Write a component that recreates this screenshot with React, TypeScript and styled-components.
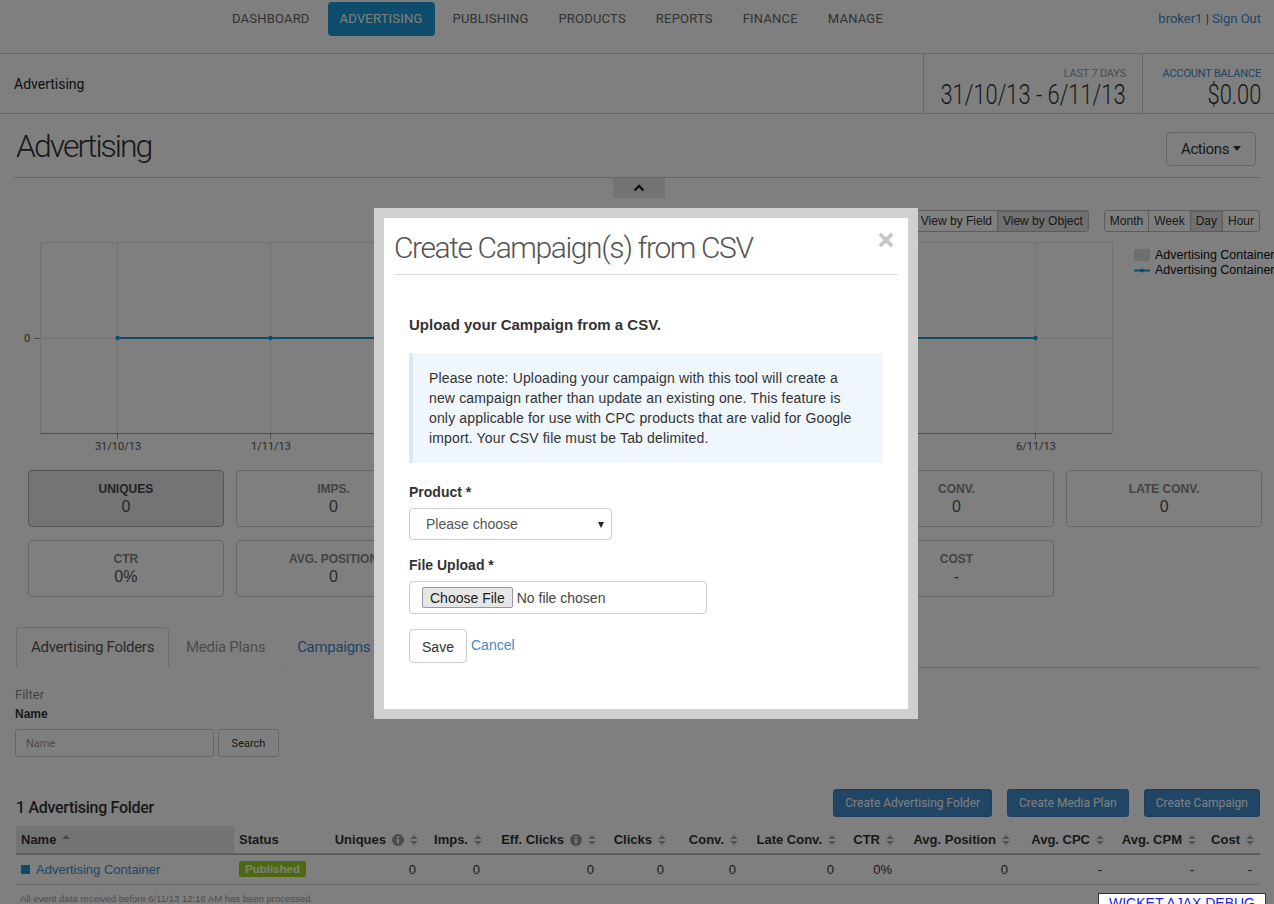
import React from "react"
import styled, { createGlobalStyle } from "styled-components"

const sans = `"Liberation Sans", Arial, sans-serif`
const cond = `Roboto, "Liberation Sans", sans-serif`
const blue = "#428bca"
const brand = "#1a9bd7"

const GlobalStyle = createGlobalStyle`
  *, *::before, *::after { box-sizing: border-box; }
  html, body { margin: 0; padding: 0; }
  body {
    background: #fff;
    font-family: ${sans};
    font-size: 13px;
    color: #333;
    width: 1274px;
    height: 904px;
    overflow: hidden;
  }
`

const Page = styled.div`
  width: 1274px;
`

/* ---------- top navigation ---------- */
const TopNav = styled.div`
  height: 54px;
  border-bottom: 1px solid #ccc;
  display: flex;
  align-items: flex-start;
  padding: 2px 13px 0 220px;
`

const NavList = styled.div`
  display: flex;
  gap: 6px;
  flex: 1;
`

const NavItem = styled.div<{ $active?: boolean }>`
  height: 34px;
  line-height: 34px;
  padding: 0 12px;
  border-radius: 4px;
  font-family: ${cond};
  font-size: 13px;
  letter-spacing: 0.2px;
  color: ${(p) => (p.$active ? "#fff" : "#666")};
  background: ${(p) => (p.$active ? brand : "transparent")};
`

const UserLinks = styled.div`
  line-height: 34px;
  font-family: ${cond};
  font-size: 13px;
  color: #555;
  a { color: ${blue}; text-decoration: none; }
`

/* ---------- header bar ---------- */
const HeaderBar = styled.div`
  height: 60px;
  border-bottom: 1px solid #ccc;
  display: flex;
  align-items: stretch;
`

const Crumb = styled.div`
  flex: 1;
  padding-left: 14px;
  display: flex;
  align-items: center;
  font-family: ${cond};
  font-size: 14px;
  color: #222;
`

const InfoPanel = styled.div<{ $w: number; $pr: number }>`
  width: ${(p) => p.$w}px;
  border-left: 1px solid #ccc;
  padding: 13px ${(p) => p.$pr}px 0 0;
  display: flex;
  flex-direction: column;
  align-items: flex-end;
  white-space: nowrap;
`

const PanelLabel = styled.div<{ $blue?: boolean }>`
  font-family: ${cond};
  font-size: 11px;
  line-height: 13px;
  color: ${(p) => (p.$blue ? blue : "#999")};
  letter-spacing: -0.2px;
`

const PanelValue = styled.div`
  font-family: ${cond};
  font-weight: 300;
  font-size: 27px;
  line-height: 30px;
  color: #333;
  transform: scaleX(0.81);
  transform-origin: right center;
`

/* ---------- title row ---------- */
const TitleRow = styled.div`
  margin: 0 14px;
  height: 64px;
  border-bottom: 1px solid #ccc;
  display: flex;
  align-items: center;
  justify-content: space-between;
`

const PageTitle = styled.h1`
  margin: 0 0 0 2px;
  font-family: ${cond};
  font-weight: 300;
  font-size: 32px;
  letter-spacing: -2px;
  color: #333;
`

const ActionsButton = styled.button`
  height: 34px;
  width: 90px;
  margin: 6px 4px 0 0;
  background: #fff;
  border: 1px solid #ccc;
  border-radius: 4px;
  font-family: ${cond};
  font-size: 15px;
  letter-spacing: -0.4px;
  color: #333;
  display: flex;
  align-items: center;
  justify-content: center;
  gap: 4px;
`

const Caret = styled.span`
  width: 0;
  height: 0;
  border-left: 4px solid transparent;
  border-right: 4px solid transparent;
  border-top: 5px solid #333;
`

const CollapseTab = styled.div`
  width: 52px;
  height: 20px;
  margin: 0 auto 0 613px;
  background: #e6e6e6;
  display: flex;
  align-items: center;
  justify-content: center;
`

/* ---------- chart ---------- */
const ChartControls = styled.div`
  margin-top: 12px;
  padding-right: 14px;
  display: flex;
  justify-content: flex-end;
  gap: 15px;
`

const Segmented = styled.div`
  display: flex;
  border: 1px solid #bbb;
  border-radius: 3px;
  overflow: hidden;
`

const SegButton = styled.div<{ $active?: boolean }>`
  height: 20px;
  line-height: 20px;
  padding: 0 5px;
  font-family: ${sans};
  font-size: 12px;
  color: #333;
  background: ${(p) => (p.$active ? "#e2e2e2" : "#fff")};
  box-shadow: ${(p) => (p.$active ? "inset 0 1px 2px rgba(0,0,0,0.15)" : "none")};
  & + & { border-left: 1px solid #bbb; }
`

const ChartSvg = styled.svg`
  display: block;
  margin-top: 4px;
`

/* ---------- stat boxes ---------- */
const StatGrid = styled.div`
  margin: 14px 12px 0 28px;
  display: grid;
  grid-template-columns: repeat(6, 1fr);
  gap: 13px 12px;
`

const StatBox = styled.div<{ $active?: boolean }>`
  height: 57px;
  border: 1px solid ${(p) => (p.$active ? "#aaa" : "#ccc")};
  border-radius: 4px;
  background: ${(p) => (p.$active ? "#e8e8e8" : "#fff")};
  text-align: center;
  padding-top: 11px;
`

const StatLabel = styled.div<{ $active?: boolean }>`
  font-family: ${sans};
  font-weight: bold;
  font-size: 12px;
  line-height: 14px;
  color: ${(p) => (p.$active ? "#444" : "#888")};
`

const StatValue = styled.div`
  font-family: ${sans};
  font-size: 16px;
  line-height: 22px;
  color: #555;
`

/* ---------- tabs & filter ---------- */
const TabBar = styled.div`
  margin: 30px 14px 0 16px;
  border-bottom: 1px solid #ddd;
  display: flex;
  gap: 2px;
`

const Tab = styled.div<{ $active?: boolean; $tone?: string }>`
  height: 41px;
  line-height: 39px;
  padding: 0 14px;
  margin-bottom: -1px;
  border: 1px solid ${(p) => (p.$active ? "#ddd" : "transparent")};
  border-bottom-color: ${(p) => (p.$active ? "#fff" : "transparent")};
  border-radius: 4px 4px 0 0;
  background: #fff;
  font-family: ${cond};
  font-size: 15px;
  letter-spacing: -0.3px;
  color: ${(p) => p.$tone || "#555"};
`

const Filter = styled.div`
  margin: 19px 0 0 15px;
`

const FilterTitle = styled.div`
  font-family: ${cond};
  font-size: 13px;
  line-height: 15px;
  color: #888;
`

const FieldLabel = styled.div`
  margin-top: 5px;
  font-family: ${sans};
  font-weight: bold;
  font-size: 12px;
  line-height: 15px;
  color: #333;
`

const FilterRow = styled.div`
  margin-top: 7px;
  display: flex;
  gap: 4px;
`

const TextInput = styled.input`
  width: 199px;
  height: 28px;
  border: 1px solid #ccc;
  border-radius: 3px;
  padding: 0 10px;
  font-family: ${cond};
  font-size: 11px;
  color: #333;
  &::placeholder { color: #999; }
`

const SmallButton = styled.button`
  height: 28px;
  width: 61px;
  background: #fff;
  border: 1px solid #ccc;
  border-radius: 3px;
  font-family: ${cond};
  font-size: 11px;
  color: #333;
`

/* ---------- list ---------- */
const ListHeader = styled.div`
  margin: 32px 14px 0 16px;
  display: flex;
  align-items: center;
  gap: 15px;
`

const ListTitle = styled.div`
  flex: 1;
  padding-top: 8px;
  font-family: ${cond};
  font-weight: 500;
  font-size: 16px;
  letter-spacing: -0.3px;
  color: #333;
`

const PrimaryButton = styled.button`
  height: 28px;
  padding: 0 11px;
  border: 1px solid #3a7cb8;
  border-radius: 3px;
  background: ${blue};
  color: #fff;
  font-family: ${cond};
  font-size: 12px;
`

const Table = styled.table`
  margin: 9px 0 0 16px;
  width: 1244px;
  table-layout: fixed;
  border-collapse: collapse;
`

const Th = styled.th<{ $left?: boolean; $sorted?: boolean }>`
  height: 28px;
  padding: 0 6px 0 5px;
  text-align: ${(p) => (p.$left ? "left" : "right")};
  background: ${(p) => (p.$sorted ? "#e6e6e6" : "transparent")};
  border-bottom: 2px solid #bbb;
  font-family: ${sans};
  font-size: 13px;
  font-weight: bold;
  color: #333;
  white-space: nowrap;
`

const Td = styled.td<{ $left?: boolean }>`
  height: 30px;
  padding: 0 8px 0 5px;
  text-align: ${(p) => (p.$left ? "left" : "right")};
  border-bottom: 1px solid #ddd;
  font-family: ${sans};
  font-size: 13px;
  color: #333;
  white-space: nowrap;
`

const HeadInner = styled.span`
  display: inline-flex;
  align-items: center;
  gap: 6px;
`

const RowLink = styled.a`
  display: inline-flex;
  align-items: center;
  gap: 6px;
  color: ${blue};
  text-decoration: none;
`

const Swatch = styled.span`
  width: 9px;
  height: 9px;
  background: ${brand};
`

const Badge = styled.span`
  display: inline-block;
  padding: 2px 6px;
  border-radius: 2px;
  background: #9ad11c;
  color: #fff;
  font-weight: bold;
  font-size: 11.5px;
`

const FootNote = styled.div`
  margin: 8px 0 0 20px;
  font-family: ${sans};
  font-size: 9.5px;
  color: #999;
`

/* ---------- modal ---------- */
const Backdrop = styled.div`
  position: fixed;
  inset: 0;
  background: rgba(0, 0, 0, 0.5);
  z-index: 10;
`

const ModalFrame = styled.div`
  position: fixed;
  left: 374px;
  top: 208px;
  width: 544px;
  border: 10px solid #d0d0d0;
  background: #fff;
  z-index: 20;
`

const ModalHeader = styled.div`
  position: relative;
  margin: 0 10px;
  padding: 12px 0 8px;
  border-bottom: 1px solid #ddd;
`

const ModalTitle = styled.h3`
  margin: 0;
  font-family: ${cond};
  font-weight: 300;
  font-size: 30px;
  line-height: 36px;
  letter-spacing: -1.4px;
  color: #555;
`

const CloseButton = styled.span`
  position: absolute;
  right: 5px;
  top: 15px;
  width: 14px;
  height: 14px;
  display: flex;
`

const ModalBody = styled.div`
  padding: 40px 25px 46px;
`

const BodyHeading = styled.h4`
  margin: 0 0 18px;
  font-family: ${sans};
  font-weight: bold;
  font-size: 15px;
  line-height: 20px;
  color: #333;
`

const Note = styled.div`
  background: #eff6fc;
  border-left: 4px solid #d5e8f6;
  padding: 15px 16px;
  font-family: ${sans};
  font-size: 14px;
  line-height: 20px;
  letter-spacing: 0.15px;
  color: #333;
`

const FormLabel = styled.div<{ $top: number }>`
  margin: ${(p) => p.$top}px 0 8px;
  font-family: ${sans};
  font-weight: bold;
  font-size: 14px;
  line-height: 16px;
  color: #333;
`

const SelectWrap = styled.div`
  position: relative;
  width: 203px;
`

const Select = styled.select`
  display: block;
  width: 203px;
  height: 32px;
  appearance: none;
  -webkit-appearance: none;
  background: #fff;
  border: 1px solid #ccc;
  border-radius: 4px;
  padding: 0 16px;
  font-family: ${sans};
  font-size: 14px;
  color: #555;
`

const SelectArrow = styled.span`
  position: absolute;
  right: 8px;
  top: 14px;
  width: 0;
  height: 0;
  border-left: 3px solid transparent;
  border-right: 3px solid transparent;
  border-top: 6px solid #222;
  pointer-events: none;
`

const FileBox = styled.div`
  width: 298px;
  height: 33px;
  border: 1px solid #ccc;
  border-radius: 4px;
  display: flex;
  align-items: center;
  padding-left: 12px;
`

const FileInput = styled.input`
  font-family: ${sans};
  font-size: 14px;
  color: #444;
  &::file-selector-button {
    font-family: ${sans};
    font-size: 14px;
    color: #222;
    height: 21px;
    padding: 0 7px;
    margin-right: 4px;
    background: #e6e6e6;
    border: 1px solid #999;
    border-radius: 2px;
  }
`

const FormActions = styled.div`
  margin-top: 15px;
  display: flex;
  align-items: flex-start;
  gap: 4px;
`

const SaveButton = styled.button`
  width: 58px;
  height: 34px;
  background: #fff;
  border: 1px solid #ccc;
  border-radius: 4px;
  font-family: ${sans};
  font-size: 14px;
  color: #333;
  padding-top: 2px;
`

const CancelLink = styled.a`
  margin-top: 8px;
  font-family: ${sans};
  font-size: 14px;
  color: ${blue};
  text-decoration: none;
`

const DebugLink = styled.div`
  position: fixed;
  left: 1098px;
  top: 893px;
  width: 168px;
  height: 30px;
  background: #fff;
  border: 1px solid #333;
  z-index: 30;
  text-align: center;
  font-family: ${sans};
  font-size: 14px;
  line-height: 18px;
  color: #2222ee;
  text-decoration: underline;
`

/* ---------- icons ---------- */
const SortIcon = ({ up }: { up?: boolean }) => (
  <svg width="8" height="12" viewBox="0 0 8 12">
    <path d="M0 5 L4 1 L8 5 Z" fill={up ? "#999" : "#aaa"} />
    {!up && <path d="M0 7 L4 11 L8 7 Z" fill="#aaa" />}
  </svg>
)

const InfoIcon = () => (
  <svg width="12" height="12" viewBox="0 0 12 12">
    <circle cx="6" cy="6" r="6" fill="#999" />
    <rect x="5" y="5" width="2" height="4.5" fill="#fff" />
    <circle cx="6" cy="3.2" r="1.1" fill="#fff" />
  </svg>
)

const columns = [
  { label: "Name", w: 218, left: true, sorted: true },
  { label: "Status", w: 92, left: true },
  { label: "Uniques", w: 98, info: true },
  { label: "Imps.", w: 64 },
  { label: "Eff. Clicks", w: 114, info: true },
  { label: "Clicks", w: 70 },
  { label: "Conv.", w: 72 },
  { label: "Late Conv.", w: 98 },
  { label: "CTR", w: 58 },
  { label: "Avg. Position", w: 116 },
  { label: "Avg. CPC", w: 94 },
  { label: "Avg. CPM", w: 92 },
  { label: "Cost", w: 58 },
]

const rowValues = ["0", "0", "0", "0", "0", "0", "0%", "0", "-", "-", "-"]

const stats = [
  { label: "Uniques", value: "0", active: true },
  { label: "Imps.", value: "0" },
  { label: "Clicks", value: "0" },
  { label: "Eff. Clicks", value: "0" },
  { label: "Conv.", value: "0" },
  { label: "Late Conv.", value: "0" },
  { label: "CTR", value: "0%" },
  { label: "Avg. Position", value: "0" },
  { label: "Avg. CPC", value: "-" },
  { label: "Avg. CPM", value: "-" },
  { label: "Cost", value: "-" },
]

const days = ["31/10/13", "1/11/13", "2/11/13", "3/11/13", "4/11/13", "5/11/13", "6/11/13"]
const dayX = days.map((_, i) => 117 + i * 153)

function Chart() {
  return (
    <ChartSvg width="1274" height="220" viewBox="0 0 1274 220">
      <rect x="40.5" y="6.5" width="1072" height="191" fill="#fff" stroke="#e4e4e4" />
      {dayX.map((x) => (
        <line key={x} x1={x + 0.5} y1="6" x2={x + 0.5} y2="197" stroke="#e4e4e4" />
      ))}
      <line x1="40" y1="102.5" x2="1112" y2="102.5" stroke="#e4e4e4" />
      <line x1="40" y1="197.5" x2="1112" y2="197.5" stroke="#999" />
      <line x1="34" y1="102.5" x2="40" y2="102.5" stroke="#999" />
      <text x="27" y="106" fontFamily="Roboto, sans-serif" fontSize="11" fill="#555" textAnchor="middle">0</text>
      {dayX.map((x, i) => (
        <g key={days[i]}>
          <line x1={x + 0.5} y1="197" x2={x + 0.5} y2="203" stroke="#999" />
          <text x={x + 1} y="214" fontFamily="Roboto, sans-serif" fontSize="11" fill="#555" textAnchor="middle">
            {days[i]}
          </text>
        </g>
      ))}
      <line x1={dayX[0]} y1="102" x2={dayX[6]} y2="102" stroke={brand} strokeWidth="2" />
      {dayX.map((x) => (
        <circle key={x} cx={x + 0.5} cy="102" r="2.2" fill={brand} />
      ))}
      <rect x="1134" y="13" width="16" height="12" rx="2" fill="#dcdcdc" />
      <text x="1155" y="23" fontFamily="Liberation Sans, Arial, sans-serif" fontSize="12.5" fill="#111">
        Advertising Container
      </text>
      <line x1="1134" y1="34.5" x2="1150" y2="34.5" stroke={brand} strokeWidth="2" />
      <circle cx="1142" cy="34.5" r="2" fill={brand} />
      <text x="1155" y="38" fontFamily="Liberation Sans, Arial, sans-serif" fontSize="12.5" fill="#111">
        Advertising Container
      </text>
    </ChartSvg>
  )
}

export default function App() {
  return (
    <>
      <GlobalStyle />
      <Page>
        <TopNav>
          <NavList>
            {["DASHBOARD", "ADVERTISING", "PUBLISHING", "PRODUCTS", "REPORTS", "FINANCE", "MANAGE"].map((n) => (
              <NavItem key={n} $active={n === "ADVERTISING"}>
                {n}
              </NavItem>
            ))}
          </NavList>
          <UserLinks>
            <a href="#">broker1</a> | <a href="#">Sign Out</a>
          </UserLinks>
        </TopNav>

        <HeaderBar>
          <Crumb>Advertising</Crumb>
          <InfoPanel $w={219} $pr={16}>
            <PanelLabel>LAST 7 DAYS</PanelLabel>
            <PanelValue>31/10/13 - 6/11/13</PanelValue>
          </InfoPanel>
          <InfoPanel $w={132} $pr={13}>
            <PanelLabel $blue>ACCOUNT BALANCE</PanelLabel>
            <PanelValue>$0.00</PanelValue>
          </InfoPanel>
        </HeaderBar>

        <TitleRow>
          <PageTitle>Advertising</PageTitle>
          <ActionsButton>
            Actions <Caret />
          </ActionsButton>
        </TitleRow>
        <CollapseTab>
          <svg width="12" height="8" viewBox="0 0 12 8">
            <path d="M1.5 6.5 L6 2 L10.5 6.5" fill="none" stroke="#222" strokeWidth="2.4" />
          </svg>
        </CollapseTab>

        <ChartControls>
          <Segmented>
            <SegButton>View by Field</SegButton>
            <SegButton $active>View by Object</SegButton>
          </Segmented>
          <Segmented>
            <SegButton>Month</SegButton>
            <SegButton>Week</SegButton>
            <SegButton $active>Day</SegButton>
            <SegButton>Hour</SegButton>
          </Segmented>
        </ChartControls>
        <Chart />

        <StatGrid>
          {stats.map((s) => (
            <StatBox key={s.label} $active={s.active}>
              <StatLabel $active={s.active}>{s.label.toUpperCase()}</StatLabel>
              <StatValue>{s.value}</StatValue>
            </StatBox>
          ))}
        </StatGrid>

        <TabBar>
          <Tab $active>Advertising Folders</Tab>
          <Tab $tone="#999">Media Plans</Tab>
          <Tab $tone={blue}>Campaigns</Tab>
          <Tab $tone={blue}>Products</Tab>
        </TabBar>

        <Filter>
          <FilterTitle>Filter</FilterTitle>
          <FieldLabel>Name</FieldLabel>
          <FilterRow>
            <TextInput placeholder="Name" />
            <SmallButton>Search</SmallButton>
          </FilterRow>
        </Filter>

        <ListHeader>
          <ListTitle>1 Advertising Folder</ListTitle>
          <PrimaryButton>Create Advertising Folder</PrimaryButton>
          <PrimaryButton>Create Media Plan</PrimaryButton>
          <PrimaryButton>Create Campaign</PrimaryButton>
        </ListHeader>

        <Table>
          <colgroup>
            {columns.map((c) => (
              <col key={c.label} style={{ width: c.w }} />
            ))}
          </colgroup>
          <thead>
            <tr>
              {columns.map((c) => (
                <Th key={c.label} $left={c.left} $sorted={c.sorted}>
                  <HeadInner>
                    {c.label}
                    {c.info && <InfoIcon />}
                    {c.label !== "Status" && <SortIcon up={c.sorted} />}
                  </HeadInner>
                </Th>
              ))}
            </tr>
          </thead>
          <tbody>
            <tr>
              <Td $left>
                <RowLink href="#">
                  <Swatch />
                  Advertising Container
                </RowLink>
              </Td>
              <Td $left>
                <Badge>Published</Badge>
              </Td>
              {rowValues.map((v, i) => (
                <Td key={i}>{v}</Td>
              ))}
            </tr>
          </tbody>
        </Table>
        <FootNote>All event data received before 6/11/13 12:16 AM has been processed.</FootNote>
      </Page>

      <Backdrop />
      <ModalFrame>
        <ModalHeader>
          <ModalTitle>Create Campaign(s) from CSV</ModalTitle>
          <CloseButton>
            <svg width="14" height="14" viewBox="0 0 14 14">
              <path d="M2 2 L12 12 M12 2 L2 12" stroke="#c4c4c4" strokeWidth="3.6" strokeLinecap="round" />
            </svg>
          </CloseButton>
        </ModalHeader>
        <ModalBody>
          <BodyHeading>Upload your Campaign from a CSV.</BodyHeading>
          <Note>
            Please note: Uploading your campaign with this tool will create a new campaign rather than update an
            existing one. This feature is only applicable for use with CPC products that are valid for Google
            import. Your CSV file must be Tab delimited.
          </Note>
          <FormLabel $top={21}>Product *</FormLabel>
          <SelectWrap>
            <Select defaultValue="">
              <option value="">Please choose</option>
            </Select>
            <SelectArrow />
          </SelectWrap>
          <FormLabel $top={17}>File Upload *</FormLabel>
          <FileBox>
            <FileInput type="file" />
          </FileBox>
          <FormActions>
            <SaveButton>Save</SaveButton>
            <CancelLink href="#">Cancel</CancelLink>
          </FormActions>
        </ModalBody>
      </ModalFrame>
      <DebugLink>WICKET AJAX DEBUG</DebugLink>
    </>
  )
}
